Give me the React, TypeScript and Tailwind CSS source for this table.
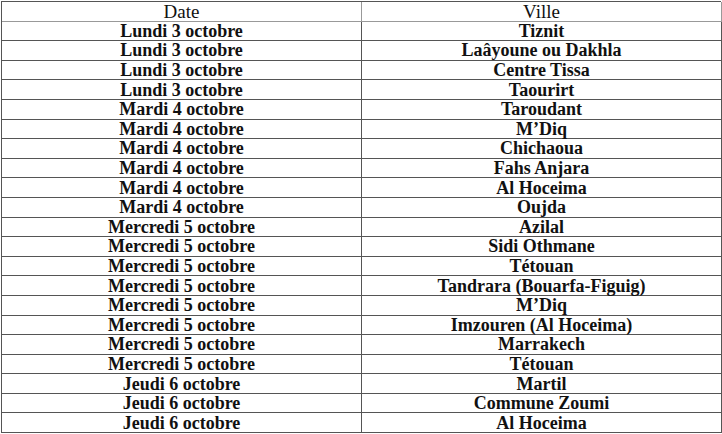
const rows: [string, string][] = [
  ["Lundi 3 octobre", "Tiznit"],
  ["Lundi 3 octobre", "Laâyoune ou Dakhla"],
  ["Lundi 3 octobre", "Centre Tissa"],
  ["Lundi 3 octobre", "Taourirt"],
  ["Mardi 4 octobre", "Taroudant"],
  ["Mardi 4 octobre", "M’Diq"],
  ["Mardi 4 octobre", "Chichaoua"],
  ["Mardi 4 octobre", "Fahs Anjara"],
  ["Mardi 4 octobre", "Al Hoceima"],
  ["Mardi 4 octobre", "Oujda"],
  ["Mercredi 5 octobre", "Azilal"],
  ["Mercredi 5 octobre", "Sidi Othmane"],
  ["Mercredi 5 octobre", "Tétouan"],
  ["Mercredi 5 octobre", "Tandrara (Bouarfa-Figuig)"],
  ["Mercredi 5 octobre", "M’Diq"],
  ["Mercredi 5 octobre", "Imzouren (Al Hoceima)"],
  ["Mercredi 5 octobre", "Marrakech"],
  ["Mercredi 5 octobre", "Tétouan"],
  ["Jeudi 6 octobre", "Martil"],
  ["Jeudi 6 octobre", "Commune Zoumi"],
  ["Jeudi 6 octobre", "Al Hoceima"],
];

export default function App() {
  return (
    <div className="w-[722px] h-[434px] bg-white overflow-hidden pt-px pl-px">
      <div className="w-[720px] grid grid-cols-[360px_360px] auto-rows-[19.6px] border-l border-t border-[#555] text-[#111] text-[18px] leading-none font-['Liberation_Serif',serif]">
        <div className="border-r border-b border-[#999] flex items-center justify-center font-normal text-[19px]">Date</div>
        <div className="border-r border-b border-[#999] flex items-center justify-center font-normal text-[19px]">Ville</div>
        {rows.map(([d, v], i) => (
          <>
            <div key={`d${i}`} className="border-r border-b border-[#555] flex items-center justify-center font-bold">{d}</div>
            <div key={`v${i}`} className="border-r border-b border-[#555] flex items-center justify-center font-bold">{v}</div>
          </>
        ))}
      </div>
    </div>
  );
}
